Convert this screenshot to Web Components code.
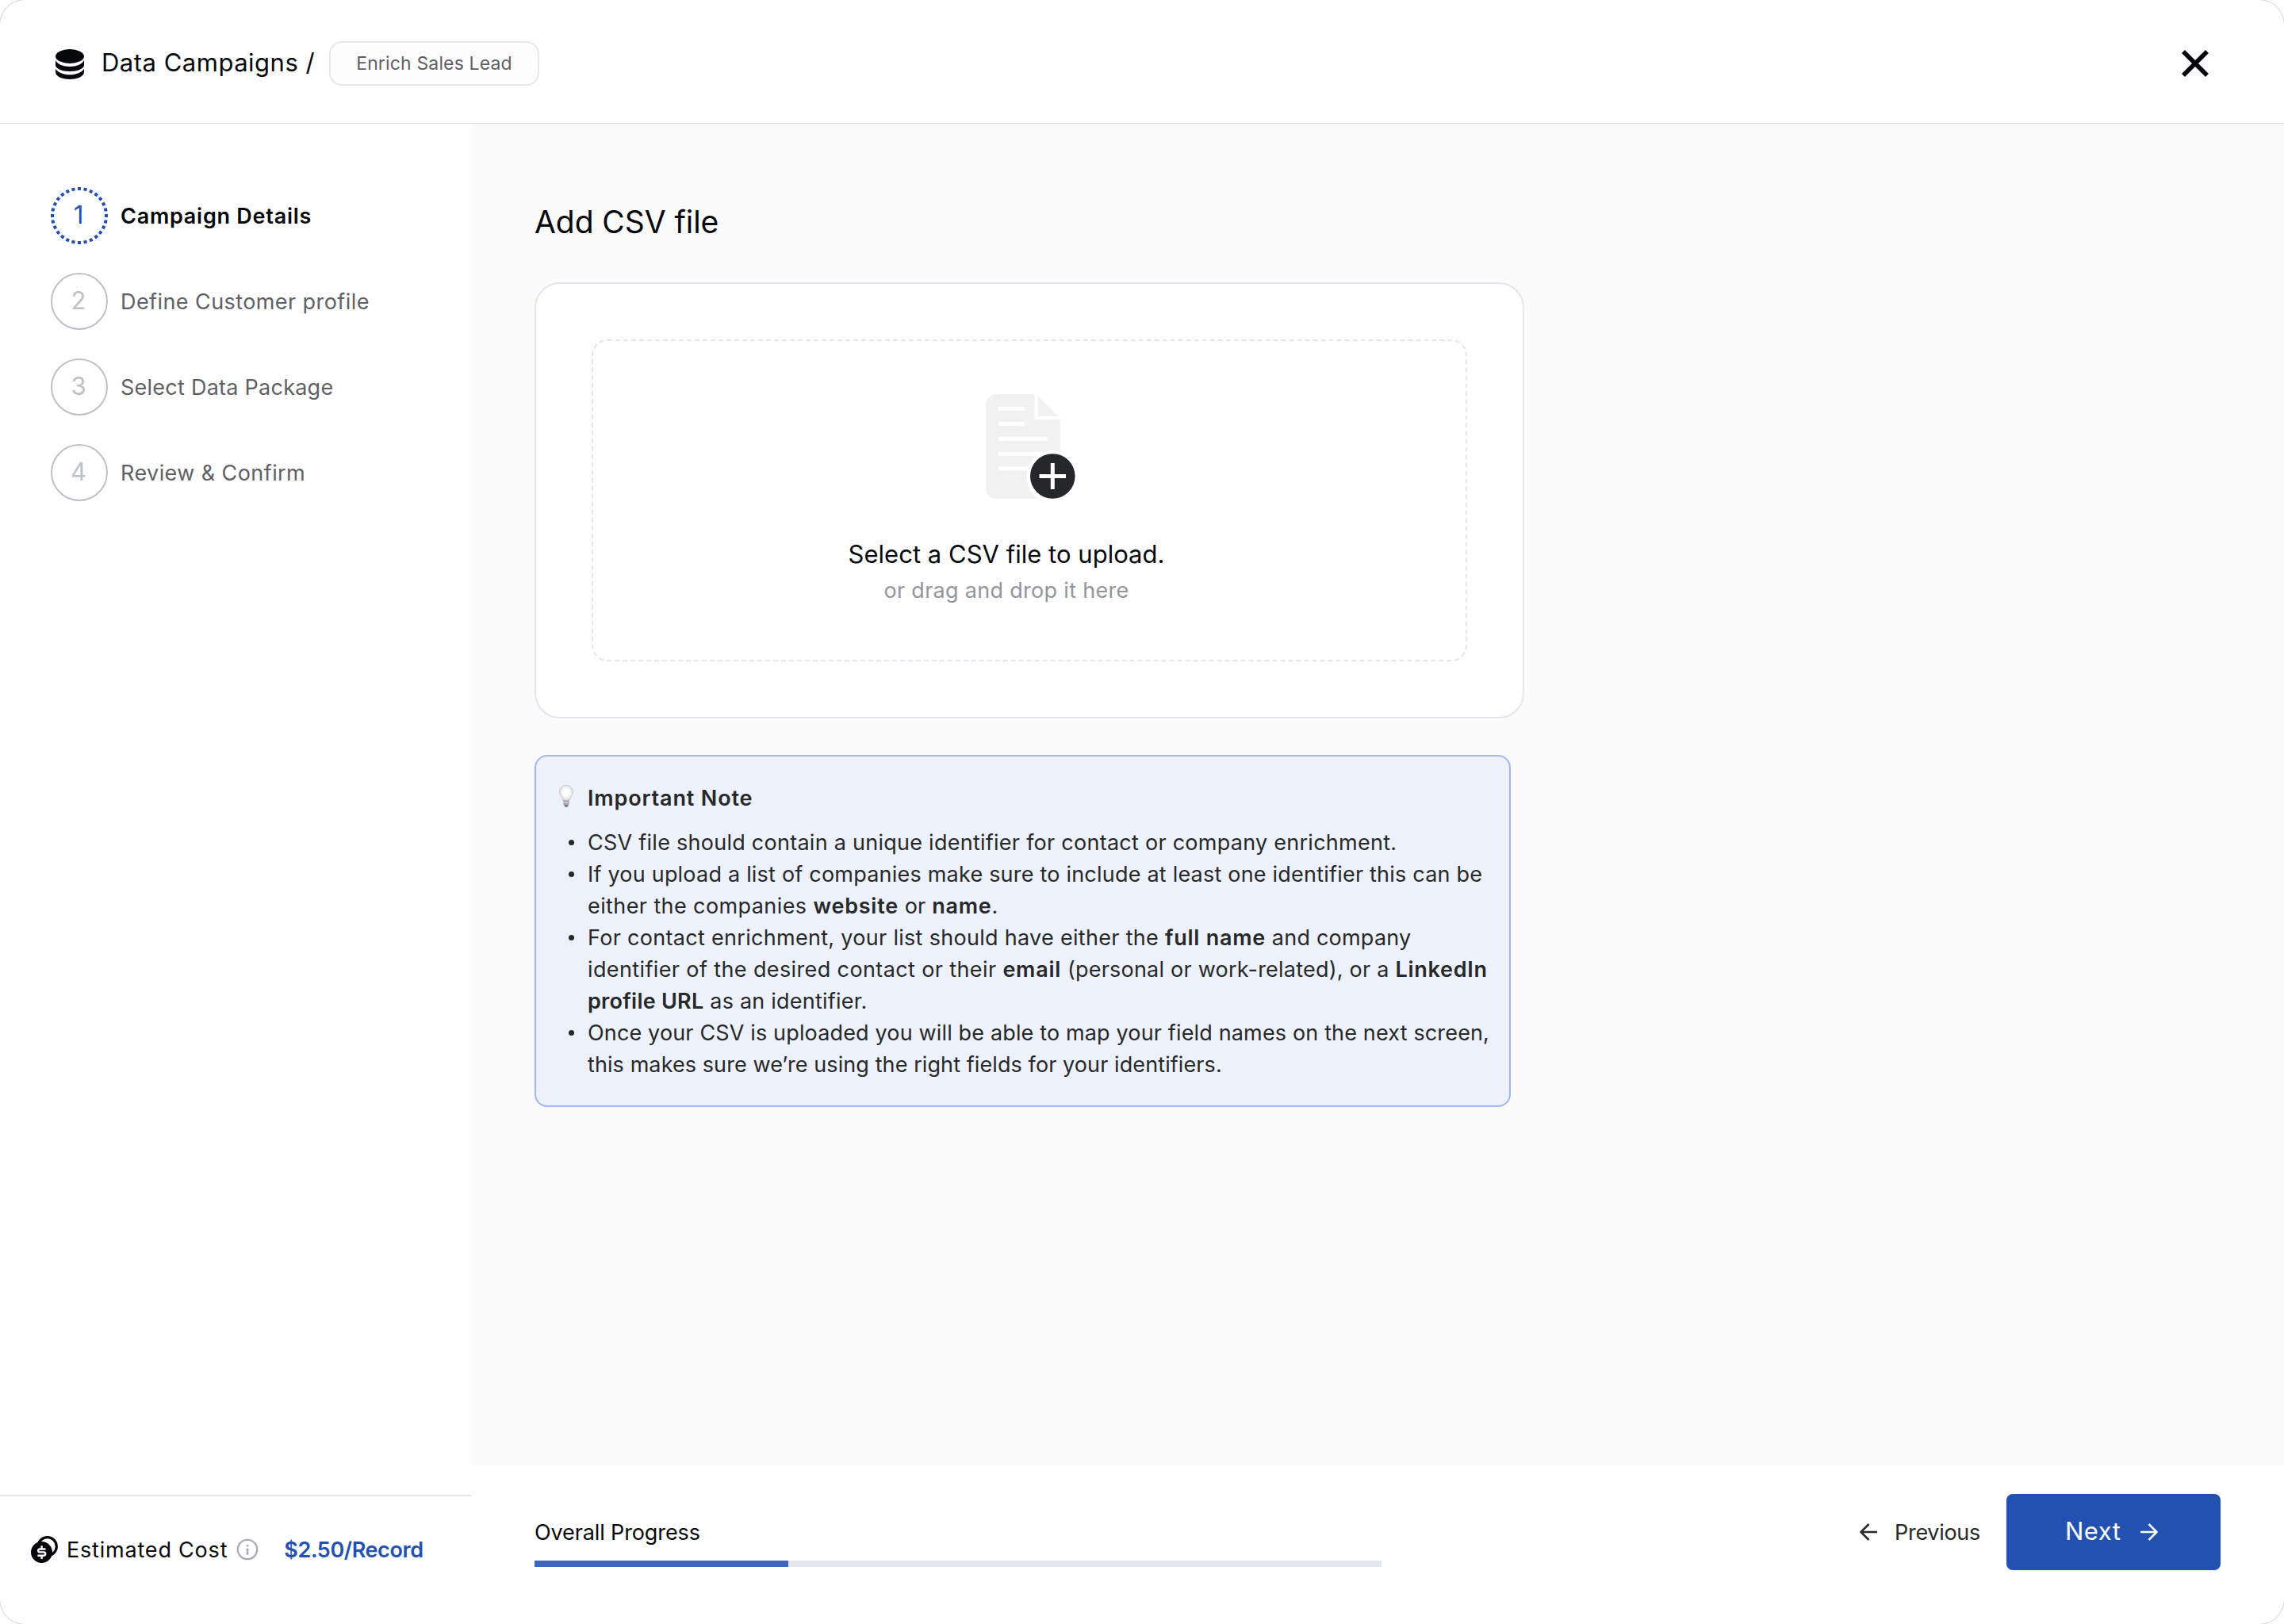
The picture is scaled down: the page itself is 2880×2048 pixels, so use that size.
<!DOCTYPE html>
<html lang="en">
<head>
<meta charset="utf-8">
<title>Data Campaigns</title>
<style>
  :root {
    --ink: #05070b;
    --ink-soft: #27282a;
    --muted: #5f6065;
    --faint: #bfc0c8;
    --line: #e3e6ef;
    --primary: #2351b2;
    --canvas: #fbfbfb;
  }
  html, body {
    margin: 0;
    width: 2880px;
    height: 2048px;
    overflow: hidden;
    background: #fff;
    font-family: Inter, "Liberation Sans", sans-serif;
    font-size: 27px;
    line-height: 40px;
    color: var(--ink);
  }
</style>
</head>
<body>
<campaign-wizard>
  <wizard-header slot="header" crumb="Enrich Sales Lead">Data Campaigns /</wizard-header>

  <wizard-step slot="steps" number="1" active style="letter-spacing: 0.75px">Campaign Details</wizard-step>
  <wizard-step slot="steps" number="2" style="letter-spacing: 0.42px">Define Customer profile</wizard-step>
  <wizard-step slot="steps" number="3" style="letter-spacing: 0.25px">Select Data Package</wizard-step>
  <wizard-step slot="steps" number="4" style="letter-spacing: 0.42px">Review &amp; Confirm</wizard-step>

  <cost-estimate slot="cost" price="$2.50/Record">Estimated Cost</cost-estimate>

  <file-drop slot="content" hint="or drag and drop it here">Select a CSV file to upload.</file-drop>
  <info-note slot="content" heading="Important Note">
    <note-item style="letter-spacing: 0.26px">CSV file should contain a unique identifier for contact or company enrichment.</note-item>
    <note-item style="letter-spacing: 0.21px">If you upload a list of companies make sure to include at least one identifier this can be<br><span style="letter-spacing: 0.4px">either the companies </span><b>website</b> or <b>name</b>.</note-item>
    <note-item style="letter-spacing: 0.22px"><span style="letter-spacing: 0.3px">For contact enrichment, your list should have either the </span><b>full name</b> and company<br><span style="letter-spacing: 0.38px">identifier of the desired contact or their </span><b>email</b> (personal or work-related), or a <b>LinkedIn</b><br><b style="letter-spacing: 0.25px">profile URL</b> as an identifier.</note-item>
    <note-item style="letter-spacing: 0.15px">Once your CSV is uploaded you will be able to map your field names on the next screen,<br><span style="letter-spacing: 0.09px">this makes sure we’re using the right fields for your identifiers.</span></note-item>
  </info-note>

  <progress-meter slot="footer" value="30">Overall Progress</progress-meter>
  <nav-button slot="footer" kind="previous">Previous</nav-button>
  <nav-button slot="footer" kind="next">Next</nav-button>
</campaign-wizard>

<script>
/**
 * Base class: attaches an open shadow root and renders once connected.
 */
class BaseElement extends HTMLElement {
  constructor() {
    super();
    this.attachShadow({ mode: "open" });
  }

  connectedCallback() {
    this.shadowRoot.innerHTML = this.template();
  }
}

/**
 * Page shell.
 * Slots: header, steps, cost, content, footer
 */
class CampaignWizard extends BaseElement {
  template() {
    return `
      <style>
        :host {
          position: relative;
          display: grid;
          grid-template: 156px 1fr / 594px 1fr;
          width: 2880px;
          height: 2048px;
        }
        header { grid-column: 1 / -1; }
        aside, main { display: flex; flex-direction: column; min-height: 0; }
        .steps {
          flex: 1;
          display: flex;
          flex-direction: column;
          gap: 36px;
          padding: 80px 0 0 64px;
        }
        .content { flex: 1; padding: 96px 80px 0; background: var(--canvas); }
        h1 {
          margin: 0 0 48px;
          font-size: 39px;
          line-height: 56px;
          font-weight: 400;
          letter-spacing: -0.07px;
        }
        footer {
          box-sizing: border-box;
          height: 200px;
          display: flex;
          align-items: flex-start;
          padding: 36px 80px 0;
        }
        .frame { position: absolute; inset: 0; pointer-events: none; }
      </style>
      <header><slot name="header"></slot></header>
      <aside>
        <div class="steps"><slot name="steps"></slot></div>
        <slot name="cost"></slot>
      </aside>
      <main>
        <div class="content">
          <h1>Add CSV file</h1>
          <slot name="content"></slot>
        </div>
        <footer><slot name="footer"></slot></footer>
      </main>
      <svg class="frame" width="2880" height="2048">
        <rect x="-.5" y="-.5" width="2881" height="2049" rx="32" fill="none" stroke="#d4d4d4"/>
      </svg>
    `;
  }
}

/**
 * Top bar with the section title, a breadcrumb chip and the close icon.
 * Attributes: crumb
 */
class WizardHeader extends BaseElement {
  template() {
    return `
      <style>
        :host {
          box-sizing: border-box;
          display: flex;
          align-items: center;
          height: 156px;
          padding: 5px 95px 0 70px;
          border-bottom: 1px solid #d9dada;
        }
        .db { margin-top: 2px; }
        .title {
          margin: -3px 0 0 22px;
          width: 287px;
          font-size: 31px;
          letter-spacing: 0.5px;
          white-space: nowrap;
        }
        .chip {
          box-sizing: border-box;
          width: 265px;
          height: 56px;
          border: 2px solid #e6e6f0;
          border-radius: 16px;
          background: #fdfdfd;
          color: var(--muted);
          font-size: 23px;
          line-height: 52px;
          letter-spacing: 0.15px;
          text-align: center;
        }
        .close { margin-left: auto; }
      </style>
      <svg class="db" width="36" height="38" viewBox="0 0 36 38" fill="#05070b">
        <ellipse cx="18" cy="9" rx="18" ry="9"/>
        <path d="M0 14C2 19 10 22 18 22S34 19 36 14V20C36 24.5 28 28 18 28S0 24.5 0 20Z"/>
        <path d="M0 24.5C2 29 10 32.3 18 32.3S34 29 36 24.5V29C36 34 28 38 18 38S0 34 0 29Z"/>
      </svg>
      <span class="title"><slot></slot></span>
      <span class="chip">${this.getAttribute("crumb")}</span>
      <svg class="close" width="34" height="34" viewBox="0 0 34 34" fill="none" stroke="#05070b" stroke-width="5.6">
        <path d="M2 2L32 32M32 2L2 32"/>
      </svg>
    `;
  }
}

/**
 * Sidebar step.
 * Attributes: number, active
 */
class WizardStep extends BaseElement {
  template() {
    const active = this.hasAttribute("active");
    // The active ring is made of 28 short dashes, the first centred at the top
    const ring = active
      ? `<circle cx="36" cy="36" r="34" stroke="#2351b2" stroke-width="4" pathLength="280" stroke-dasharray="5.4 4.6" stroke-dashoffset="2.7"/>`
      : `<circle cx="36" cy="36" r="35" stroke="#bfc0c8" stroke-width="2"/>`;
    return `
      <style>
        :host {
          display: flex;
          align-items: center;
          gap: 16px;
          height: 72px;
          color: var(--muted);
          white-space: nowrap;
        }
        :host([active]) { color: var(--ink); font-weight: 600; }
        .badge { display: grid; place-items: center; width: 72px; height: 72px; }
        .badge > * { grid-area: 1 / 1; }
        .number {
          padding: 0 2px 3px 0;
          font-size: 31px;
          font-weight: 400;
          letter-spacing: 0;
          color: var(--faint);
        }
        :host([active]) .number { color: var(--primary); }
        .label { padding-top: 2px; }
      </style>
      <span class="badge">
        <svg width="72" height="72" fill="none">${ring}</svg>
        <span class="number">${this.getAttribute("number")}</span>
      </span>
      <span class="label"><slot></slot></span>
    `;
  }
}

/**
 * Cost line at the bottom of the sidebar.
 * Attributes: price
 */
class CostEstimate extends BaseElement {
  template() {
    return `
      <style>
        :host {
          box-sizing: border-box;
          display: flex;
          align-items: center;
          height: 163px;
          padding: 0 0 27px 39px;
          border-top: 2px solid var(--line);
          white-space: nowrap;
        }
        .label { margin: 0 11px 0 11px; padding-top: 2px; letter-spacing: 0.8px; }
        .price {
          margin-left: 32px;
          padding-top: 2px;
          color: var(--primary);
          font-weight: 600;
          letter-spacing: -0.4px;
        }
      </style>
      <svg width="34" height="34" viewBox="0 0 34 34" fill="none">
        <circle cx="20.7" cy="13.2" r="11.6" stroke="#05070b" stroke-width="3.2"/>
        <circle cx="13.5" cy="20.5" r="13.5" fill="#05070b"/>
        <path d="M18.5 16.5H11.4Q9.2 16.5 9.2 18.4T11.4 20.4H15.8Q18.2 20.4 18.2 22.5T15.8 24.7H8.4M13.6 12.2V16M13.6 25V29" stroke="#fff" stroke-width="2.4"/>
      </svg>
      <span class="label"><slot></slot></span>
      <svg width="28" height="28" viewBox="0 0 28 28" fill="none" stroke="#a9abb5">
        <circle cx="14" cy="14" r="12.2" stroke-width="2.3"/>
        <path d="M14 12.6V20.8M14 8V10.6" stroke-width="2.6"/>
      </svg>
      <span class="price">${this.getAttribute("price")}</span>
    `;
  }
}

/**
 * Upload card with its dashed drop area.
 * Attributes: hint
 */
class FileDrop extends BaseElement {
  template() {
    return `
      <style>
        :host {
          box-sizing: border-box;
          display: block;
          width: 1248px;
          height: 550px;
          padding: 70px;
          border: 2px solid var(--line);
          border-radius: 32px;
          background: #fff;
        }
        .zone {
          box-sizing: border-box;
          display: flex;
          flex-direction: column;
          align-items: center;
          height: 406px;
          padding-top: 67px;
          border: 2px dashed #e4e5ee;
          border-radius: 20px;
        }
        svg { margin-left: 3px; }
        .text {
          margin-top: 48px;
          padding-right: 58px;
          text-align: center;
          font-size: 31px;
          line-height: 44px;
          letter-spacing: 0.02px;
        }
        .hint {
          margin-top: 2px;
          color: #93959b;
          font-size: 27px;
          letter-spacing: 0.3px;
        }
      </style>
      <div class="zone">
        <svg width="113" height="132" viewBox="0 0 113 132">
          <path d="M14 0H61.5V32.5H94V132H14A14 14 0 0 1 0 118V14A14 14 0 0 1 14 0Z" fill="#f1f1f1"/>
          <path d="M66 2.5V27.7H91.5Z" fill="#f1f1f1"/>
          <path d="M16 18.5H49M16 37.3H49M16 56.2H77.5M16 75.2H77.5M16 94H77.5" stroke="#fff" stroke-width="5"/>
          <path d="M66 132C56 126 51.6 114 51.6 103.5A32.7 32.7 0 0 1 94 72.5V132Z" fill="#fff"/>
          <circle cx="84.3" cy="103.5" r="28.3" fill="#262729"/>
          <path d="M67.5 103.5H101M84.3 87V120" stroke="#fff" stroke-width="5"/>
        </svg>
        <div class="text">
          <slot></slot>
          <div class="hint">${this.getAttribute("hint")}</div>
        </div>
      </div>
    `;
  }
}

/**
 * Highlighted note; takes <note-item> children.
 * Attributes: heading
 */
class InfoNote extends BaseElement {
  template() {
    return `
      <style>
        :host {
          box-sizing: border-box;
          display: block;
          width: 1231px;
          margin-top: 46px;
          padding: 33px 0 31px;
          border: 2px solid #a0b8ee;
          border-radius: 16px;
          background: #edf1fc;
          color: var(--ink-soft);
        }
        .heading {
          display: flex;
          align-items: center;
          gap: 18px;
          margin-bottom: 16px;
          padding-left: 29px;
          font-weight: 600;
          letter-spacing: 0.85px;
        }
        .heading svg { margin-top: -6px; }
      </style>
      <div class="heading">
        <svg width="18" height="28" viewBox="0 0 18 28">
          <defs>
            <radialGradient id="glass" cx=".5" cy=".45" r=".6">
              <stop offset=".3" stop-color="#fff"/>
              <stop offset=".75" stop-color="#e6e6e8"/>
              <stop offset="1" stop-color="#b4b4b8"/>
            </radialGradient>
          </defs>
          <path d="M9 .5C4 .5 .6 4 .6 8.8C.6 13.5 4.6 15 5.2 20H12.8C13.4 15 17.4 13.5 17.4 8.8C17.4 4 14 .5 9 .5Z" fill="url(#glass)" stroke="#bfbfc3" stroke-width=".8"/>
          <path d="M5.3 19.5H12.7V24.5L11 26.5H7L5.3 24.5Z" fill="#a9a9ad"/>
          <path d="M5.3 22H12.7" stroke="#dcdcdf"/>
          <path d="M6.5 25.5H11.5L10.5 27.5H7.5Z" fill="#5e5e62"/>
        </svg>
        <span>${this.getAttribute("heading")}</span>
      </div>
      <slot></slot>
    `;
  }
}

class NoteItem extends BaseElement {
  template() {
    return `
      <style>
        :host { display: flex; white-space: nowrap; }
        .dot {
          flex: none;
          width: 7px;
          height: 7px;
          margin: 16px 17px 0 41px;
          border-radius: 50%;
          background: var(--ink-soft);
        }
        ::slotted(b) { font-weight: 600; letter-spacing: 0.75px; }
      </style>
      <span class="dot"></span>
      <div><slot></slot></div>
    `;
  }
}

/**
 * Labelled progress bar.
 * Attributes: value (percent)
 */
class ProgressMeter extends BaseElement {
  template() {
    return `
      <style>
        :host {
          display: block;
          width: 1068px;
          margin: 29px auto 0 0;
          letter-spacing: -0.12px;
        }
        .track { height: 8px; margin-top: 15px; background: #e3e6ef; }
        .fill { height: 100%; background: #3d66bc; }
      </style>
      <slot></slot>
      <div class="track"><div class="fill" style="width: ${this.getAttribute("value")}%"></div></div>
    `;
  }
}

/**
 * Footer navigation button.
 * Attributes: kind ("previous" | "next")
 */
class NavButton extends BaseElement {
  template() {
    const next = this.getAttribute("kind") === "next";
    const arrow = next
      ? `<path d="M0 11H20M10.500 1L20.500 11L10.500 21"/>`
      : `<path d="M22 11H2M11.500 1L1.500 11L11.500 21"/>`;
    const icon = `<svg width="22" height="22" viewBox="0 0 22 22" fill="none" stroke="currentColor" stroke-width="2.5">${arrow}</svg>`;
    const label = `<span><slot></slot></span>`;
    return `
      <style>
        :host {
          display: flex;
          align-items: center;
          height: 96px;
          color: var(--ink-soft);
          letter-spacing: -0.3px;
        }
        :host([kind="previous"]) { gap: 22px; margin-right: 33px; }
        :host([kind="previous"]) span { padding-top: 1px; }
        :host([kind="next"]) {
          box-sizing: border-box;
          width: 270px;
          padding-left: 74px;
          gap: 25px;
          border-radius: 8px;
          background: var(--primary);
          box-shadow: 0 1px 2px rgba(16, 24, 40, 0.12);
          color: #fff;
          font-size: 31px;
          letter-spacing: 0.5px;
        }
        :host([kind="next"]) span { margin-top: -2px; }
      </style>
      ${next ? label + icon : icon + label}
    `;
  }
}

customElements.define("campaign-wizard", CampaignWizard);
customElements.define("wizard-header", WizardHeader);
customElements.define("wizard-step", WizardStep);
customElements.define("cost-estimate", CostEstimate);
customElements.define("file-drop", FileDrop);
customElements.define("info-note", InfoNote);
customElements.define("note-item", NoteItem);
customElements.define("progress-meter", ProgressMeter);
customElements.define("nav-button", NavButton);
</script>
</body>
</html>
